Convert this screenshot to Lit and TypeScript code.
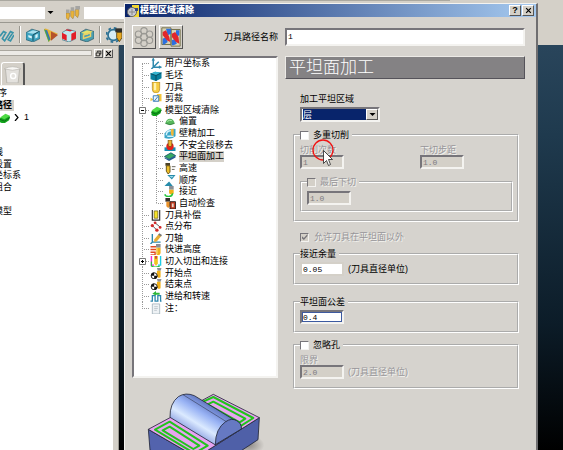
import { LitElement, html, css, svg } from "lit";
import { customElement, property } from "lit/decorators.js";
import { classMap } from "lit/directives/class-map.js";

const BLOCK_GREEN = svg`<path d="M1 7l6-4 5 2-1 4-6 4-4-2z" fill="#12a51c"/><path d="M1 6l6-4 5 2-6 4z" fill="#4fdb45"/><path d="M1 8l5 2 6-4" fill="none" stroke="#0b6b14"/>`;
const TOOL = svg`<path d="M6 0h5v4h-5z" fill="#8b8f94"/><path d="M6 4h5v6l-2 3-3-2z" fill="#f0b019"/><path d="M7 4v7" stroke="#fff0a0"/>`;
const START = svg`<path d="M7 0h5l-1 3H8z" fill="#8b8f94"/><path d="M7 3h4v7l-2 1-2-2z" fill="#f0b019"/><circle cx="4" cy="8.500" r="3.300" fill="#fff" stroke="#111"/><path d="M4 8.500V5A3.500 3.500 0 0 0 .5 8.500zM4 8.500V12a3.500 3.500 0 0 0 3.500-3.500z" fill="#111"/>`;

const ICONS: Record<string, unknown> = {
  axes: svg`<path d="M3 1v9h8M3 10l6-6M2 3l1-2 1 2M9 9l2 1-2 1M1 12l2-2" fill="none" stroke="#2d89ad" stroke-width="1.600"/>`,
  stock: svg`<path d="M0 4l5-2 7 1v6l-6 3-6-2z" fill="#087f9e"/><path d="M0 4l5-2 7 1-6 3z" fill="#35b4cf"/><path d="M0 4l6 2v6M6 6l6-3" fill="none" stroke="#07465c"/>`,
  tool: svg`<path d="M2 0h8v7q0 5-4 5t-4-5z" fill="#f6cb3f" stroke="#a77a17" stroke-width=".7"/><path d="M5 1v8" stroke="#fff3b0" stroke-width="2.500"/>`,
  clip: svg`<path d="M0 5l3 2-3 2zM7 1h5v8H7z" fill="#f4c53c"/><path d="M3 3h6v6H3z" fill="#e8f4fb" stroke="#2e75b5"/><path d="M4 9l4-5" stroke="#2e75b5"/>`,
  block: BLOCK_GREEN,
  offset: svg`<path d="M1 8q1-5 5-5t5 5q-5 3-10 0z" fill="#57b75c"/><path d="M3 6q2-2 5-1" stroke="#b9efb5" fill="none"/><path d="M1 8q5 3 10 0" stroke="#327f3c" fill="none"/>`,
  wall: svg`<path d="M0 6q4-6 12-5v8q-4 4-12 2z" fill="#3ba6c8"/><path d="M2 8q0-5 5-5M3 9h7" fill="none" stroke="#d4f1fa" stroke-width="1.500"/><path d="M7 1h3v6l-1 2-2-2z" fill="#f0b83b"/>`,
  unsafe: svg`<path d="M0 8h12v4H0z" fill="#188db3"/><circle cx="6" cy="7" r="4" fill="#e4231d"/><path d="M4 0h4v6q-2 3-4 0z" fill="#eeb231" stroke="#5d3b10" stroke-width=".7"/>`,
  flat: svg`<path d="M0 6l7-4 5 3-7 4z" fill="#36aa64" stroke="#225c6b"/><path d="M0 7v1l5 3 7-4V5L5 9z" fill="#255c91"/>`,
  speed: svg`<path d="M1 0h5v3H1z" fill="#4b4228"/><path d="M2 3h4v7l-2 2-2-3z" fill="#eebf29" stroke="#5e4b13"/><path d="M8 4h4M8 7h3" stroke="#5f5b50"/>`,
  order: svg`<path d="M3 0h9L8 5z" fill="#268baa"/><path d="M5 1h5L8 3z" fill="#a2dceb"/><path d="M0 12h9L5 7z" fill="#268baa"/>`,
  approach: svg`<path d="M5 0h5v4H5z" fill="#8b8f94"/><path d="M5 4h5v4q-2 3-5 0z" fill="#f0b019"/><path d="M9 8q-1 4-5 3.500T1 9" fill="none" stroke="#22c63c" stroke-width="1.700"/>`,
  verify: svg`<path d="M1 0h5v4H1z" fill="#35302b"/><path d="M2 4h4v5l-2 2-2-2z" fill="#e9922b"/><path d="M6 4h6v8H6z" fill="#c13b1f" stroke="#2b2422"/><path d="M8 6h2v4H8z" fill="#e8d6c8"/>`,
  comp: svg`<path d="M2 0v11h8V0" fill="none" stroke="#333" stroke-width="1.300"/><path d="M4 1h4v8H4z" fill="#f4e327" stroke="#5e4b13" stroke-width=".7"/>`,
  points: svg`<path d="M2 5l5 5M5 2l6 5" stroke="#4a4a4a" fill="none"/><g fill="#d22a2a"><circle cx="2" cy="5" r="1.800"/><circle cx="5" cy="2" r="1.500"/><circle cx="7" cy="10" r="1.800"/><circle cx="10.500" cy="7" r="1.500"/></g>`,
  axis: svg`<path d="M2 1v9h9M0 12l3-3" fill="none" stroke="#2d89ad" stroke-width="1.500"/><path d="M4 7l5-6 3 2-5 6-3 1z" fill="#e6ad35"/><path d="M9 1l3 2" stroke="#777" stroke-width="2"/>`,
  rapid: svg`<path d="M0 3h6M0 6h6M0 9h5v3H0" stroke="#e04a22" fill="none" stroke-width="1.500"/>${TOOL}`,
  leads: svg`<path d="M1 0v10h3" fill="none" stroke="#f02ad0" stroke-width="1.500"/><path d="M11 0v10H8" fill="none" stroke="#1ecde6" stroke-width="1.500"/><path d="M4 0h4v8l-2 3-2-3z" fill="#f0c522"/><path d="M1 6v5q4 2 9 0" fill="none" stroke="#28c03c" stroke-width="1.300"/><path d="M5 0h2v3H5z" fill="#c44"/>`,
  start: START,
  feed: svg`<path d="M0 11h2V5h3v6h3V5h3v6h1" fill="none" stroke="#2b86ad" stroke-width="1.400"/><path d="M2 3l4-3v2h4v2H6v1z" fill="#2fb83a"/>`,
  note: svg`<path d="M2 1h8v11H2z" fill="#eef2f5" stroke="#8fa0aa" stroke-width=".7"/><path d="M4 4h4M4 6h4M4 8h3" stroke="#aab4bc" stroke-width=".7"/>`,
  swirl: svg`<path d="M0 7l3-4 2 1-3 5 2 2 5-8 2 1-4 6 2 1 3-5" fill="none" stroke="#3993a8" stroke-width="1.400"/>`,
  cube: svg`<path d="M0 4l5-3 7 2v6l-6 3-6-2z" fill="#3fa3bf" stroke="#255d70" stroke-width=".6"/><path d="M1 4l5-2 5 1-5 2z" fill="#a8dfed"/><path d="M6 6v5M6 6l5-3" stroke="#16495a" stroke-width=".8"/><path d="M2 6l3 1v2L2 8zM8 6l2-1v3L8 9z" fill="#d8f4fa"/>`,
  cone: svg`<path d="M0 1q1-1 3 0l9 4-8 7z" fill="#e8b23a"/><path d="M0 1l2 1 3 8-1 2z" fill="#44a552"/><path d="M6 3l6 3-6 5z" fill="#b5522a"/><path d="M2 2l3 8" stroke="#3872b5" stroke-width="1.300"/>`,
  redcube: svg`<path d="M0 4l5-3 7 2v6l-6 3-6-2z" fill="#bfe7ee" stroke="#3b7485" stroke-width=".6"/><path d="M0 4l4 2v5l-4-2zM8 5l4-2v6l-4 2zM4 1l5 1-2 1-4-1z" fill="#e31d28"/>`,
  ringcube: svg`<path d="M0 4l5-3 7 2v6l-6 3-6-2z" fill="#4c9eb0" stroke="#2d5866" stroke-width=".6"/><path d="M1 4l5-2 5 1-5 3z" fill="#e5e36a"/><path d="M3 9V6l6-2v3z" fill="none" stroke="#ebd066" stroke-width="1.300"/>`,
  gear: svg`<circle cx="5.500" cy="6" r="4" fill="#d6ecf5" stroke="#2d7194" stroke-width="1.300"/><circle cx="5.500" cy="6" r="5.300" fill="none" stroke="#2d7194" stroke-width="1.400" stroke-dasharray="2 2.200"/><path d="M7 1h5v3H7z" fill="#30302c"/><path d="M8 4h4v4l-2 3-2-3z" fill="#e6a823" stroke="#4d3a10" stroke-width=".6"/>`,
  drills: svg`<g stroke="#8b7240" stroke-width=".4"><path d="M0 6h3v3l-1 3-2-2z" fill="#e9b33a"/><path d="M4 4h3v4l-1 3-2-2z" fill="#e9b33a"/><path d="M8 3h3v4l-1 3-2-2z" fill="#e9b33a"/></g><path d="M0 3h3v3H0zM4 1h3v3H4zM8 0h4v3H8z" fill="#a5a5a3"/>`,
  bin: svg`<path d="M1 2h10l-1 10H2z" fill="#e4e2de" stroke="#b5b2ab" stroke-width=".6"/><path d="M0 2q6-3 12 0-6 2-12 0z" fill="#f8f7f4" stroke="#bbb8b2" stroke-width=".5"/><circle cx="6.500" cy="7" r="1.800" fill="none" stroke="#fff"/>`,
  recycle: svg`<g fill="none" stroke="#9a9994" stroke-width=".7"><circle cx="6" cy="6" r="2.200"/><circle cx="6" cy="2.300" r="1.900"/><circle cx="2.700" cy="4.300" r="1.900"/><circle cx="9.300" cy="4.300" r="1.900"/><circle cx="2.700" cy="8" r="1.900"/><circle cx="9.300" cy="8" r="1.900"/><circle cx="6" cy="9.800" r="1.900"/></g>`,
  copy: svg`<path d="M.5.5h5.500v10H.5zM6 1.500h5.500v10H6z" fill="#d8d3b4" stroke="#77744f" stroke-width=".6"/><path d="M3 1h3v3L4 5zM1 7l2-1 1 3-2 1.500H1zM9 2h2v3L9 6zM6.500 8l2-1 1 3-2 1h-1z" fill="#2c6fe0"/><path d="M1 3l2-1 2 4 .5 3-2-1L1 5zM6.500 4l2-1 2 3 .5 4-2-1-2.500-3z" fill="#e2272b"/>`,
  app: svg`<path d="M5 0h7v12H5z" fill="#f3d732"/><circle cx="5" cy="7" r="4.500" fill="#c9ccd2" stroke="#666"/><path d="M2 7h6M5 4v6" stroke="#888"/><path d="M8 3h3v3H8z" fill="#3a4a80"/>`,
  restore: svg`<path d="M4 4V2h6v5H8M2 5h6v5H2z" fill="none" stroke="#000" stroke-width="1.300"/>`,
  close: svg`<path d="M2 2l8 8M10 2l-8 8" stroke="#000" stroke-width="2"/>`,
  down: svg`<path d="M2 4h8l-4 4z" fill="#000"/>`,
};

const icon = (name: string) =>
  html`<svg class="icon ${name}" viewBox="0 0 12 12" aria-hidden="true">${ICONS[name]}</svg>`;

interface TreeNode { text: string; icon: string; child?: boolean; box?: string; selected?: boolean; last?: boolean; first?: boolean; }

const NODES: TreeNode[] = [
  { text: "用户坐标系", icon: "axes", first: true },
  { text: "毛坯", icon: "stock" },
  { text: "刀具", icon: "tool" },
  { text: "剪裁", icon: "clip" },
  { text: "模型区域清除", icon: "block", box: "−" },
  { text: "偏置", icon: "offset", child: true },
  { text: "壁精加工", icon: "wall", child: true },
  { text: "不安全段移去", icon: "unsafe", child: true },
  { text: "平坦面加工", icon: "flat", child: true, selected: true },
  { text: "高速", icon: "speed", child: true },
  { text: "顺序", icon: "order", child: true },
  { text: "接近", icon: "approach", child: true },
  { text: "自动检查", icon: "verify", child: true, last: true },
  { text: "刀具补偿", icon: "comp" },
  { text: "点分布", icon: "points" },
  { text: "刀轴", icon: "axis" },
  { text: "快进高度", icon: "rapid" },
  { text: "切入切出和连接", icon: "leads", box: "+" },
  { text: "开始点", icon: "start" },
  { text: "结束点", icon: "start" },
  { text: "进给和转速", icon: "feed" },
  { text: "注：", icon: "note", last: true },
];

const shared = css`
  * { box-sizing: border-box; }
  .icon { display: block; width: 12px; height: 12px; flex: none; }
  ul { list-style: none; margin: 0; padding: 0; }
  button, input, select {
    font: inherit; color: inherit; margin: 0; padding: 0; border-radius: 0; outline: 0; min-width: 0;
  }
  .raised {
    display: grid; place-items: center; background: #d4d0c8;
    border: 1px solid; border-color: #fff #555 #555 #fff;
  }
`;

@customElement("strategy-tree")
class StrategyTree extends LitElement {
  static styles = [shared, css`
    :host {
      display: block; height: 322px; background: #fff;
      border: 2px solid; border-color: #77757a #f4f3f0 #f4f3f0 #77757a;
    }
    ul { display: grid; grid-auto-rows: minmax(0, 1fr); height: 256px; }
    li { display: flex; align-items: stretch; white-space: nowrap; line-height: 11px; min-height: 0; }
    .icon { align-self: center; margin-right: 3px; height: 11px; }
    .text { align-self: center; }
    .selected { background: #d4d0c8; }
    .guide {
      --v: repeating-linear-gradient(#999 0 1px, #fff 1px 2px);
      --h: repeating-linear-gradient(90deg, #999 0 1px, #fff 1px 2px);
      flex: none; width: 16px; position: relative;
      background: var(--v) 8px 0 / 1px 100% no-repeat;
    }
    .branch { background: var(--v) 8px 0 / 1px 100% no-repeat, var(--h) 8px 50% / 8px 1px no-repeat; }
    .inner { width: 14px; background: var(--v) 6px 0 / 1px 100% no-repeat, var(--h) 6px 50% / 8px 1px no-repeat; }
    .first { background: var(--v) 8px 100% / 1px 50% no-repeat, var(--h) 8px 50% / 8px 1px no-repeat; }
    .last { background: var(--v) 8px 0 / 1px 50% no-repeat, var(--h) 8px 50% / 8px 1px no-repeat; }
    .inner.last { background: var(--v) 6px 0 / 1px 50% no-repeat, var(--h) 6px 50% / 8px 1px no-repeat; }
    .box { position: absolute; left: 5px; top: 2px; width: 7px; height: 7px; background: #fff; }
  `];
  render() {
    return html`<ul role="tree" aria-label="策略">${NODES.map((n) => html`
      <li role="treeitem" aria-selected=${n.selected ? "true" : "false"}>
        <span class=${classMap({ guide: true, branch: !n.child, first: !!n.first, last: !!n.last && !n.child })}>
          ${n.box ? html`<svg class="box" viewBox="0 0 7 7"><path d=${n.box === "+" ? "M2 3.5h3M3.5 2v3" : "M2 3.5h3"} stroke="#000"/><path d="M.5.5h6v6h-6z" fill="none" stroke="#777"/></svg>` : ""}
        </span>
        ${n.child ? html`<span class=${classMap({ guide: true, inner: true, last: !!n.last })}></span>` : ""}
        ${icon(n.icon)}
        <span class=${classMap({ text: true, selected: !!n.selected })}>${n.text}</span>
      </li>`)}</ul>`;
  }
}

@customElement("explorer-pane")
class ExplorerPane extends LitElement {
  static styles = [shared, css`
    :host { display: flex; flex-direction: column; background: #d4d0c8; border-right: 1px solid #9a9890; padding-right: 5px; min-height: 0; }
    .caption { display: flex; align-items: center; gap: 1px; height: 12px; margin-top: 1px; }
    .grip { flex: 1; height: 6px; margin-right: 1px; border: 1px solid #aaa79f; border-left: 0; background: #eceae6; }
    .raised { width: 9px; height: 9px; }
    .raised .icon { width: 7px; height: 7px; }
    .tabs { height: 27px; display: flex; align-items: flex-end; border-bottom: 1px solid #f4f3f0; padding-left: 1px; }
    .tab { width: 24px; height: 23px; border-width: 1px 2px 0 1px; border-top-left-radius: 3px; border-top-right-radius: 3px; }
    .tab .icon { width: 17px; height: 17px; }
    .list { flex: 1; background: #fff; overflow: hidden; }
    ul { display: grid; grid-auto-rows: minmax(0, 1fr); height: 129px; margin: 2px 0 0 -24px; }
    li { display: flex; align-items: center; white-space: nowrap; line-height: 11px; min-height: 0; }
    .current span { background: #d4d0c8; font-weight: bold; padding-right: 2px; }
    .entry { padding-left: 23px; gap: 4px; }
    .entry .icon { width: 11px; height: 11px; }
    .entry span { padding-left: 1px; }
    .chevron { width: 5px; height: 7px; }
  `];
  render() {
    return html`
      <div class="caption"><span class="grip"></span>
        <button class="raised" aria-label="还原">${icon("restore")}</button>
        <button class="raised" aria-label="关闭">${icon("close")}</button></div>
      <div class="tabs"><button class="raised tab" aria-label="回收站">${icon("bin")}</button></div>
      <div class="list"><ul>
        <li>NC程序</li>
        <li class="current"><span>刀具路径</span></li>
        <li class="entry">${icon("block")}<svg class="chevron" viewBox="0 0 5 7"><path d="M1 0l3 3.500L1 7" fill="none" stroke="#000" stroke-width="1.200"/></svg><span>1</span></li>
        <li></li><li></li>
        <li>参考线</li><li>特征设置</li><li>用户坐标系</li><li>层和组合</li><li></li><li>残留模型</li>
      </ul></div>`;
  }
}

@customElement("strategy-form")
class StrategyForm extends LitElement {
  static styles = [shared, css`
    :host { display: block; line-height: 10px; }
    h1 {
      margin: 0; height: 23px; padding-left: 3px; font-size: 17px; line-height: 21px; font-weight: 300;
      color: #fff; background: #848284; border: 1px solid; border-color: #eceae6 #55535a #55535a #eceae6;
    }
    form { padding: 15px 6px 0 8px; display: flex; flex-direction: column; }
    .area { display: flex; flex-direction: column; gap: 3px; align-items: flex-start; padding-left: 7px; margin-bottom: 8px; }
    .combo {
      display: grid; grid-template-columns: 1fr 12px; width: 80px; height: 15px; background: #fff;
      border: 2px solid; border-color: #77757a #f4f3f0 #f4f3f0 #77757a;
    }
    .combo select {
      appearance: none; grid-area: 1 / 1 / 2 / 3; width: 100%; height: 11px; padding-left: 1px; line-height: 10px;
      border: 0; background: linear-gradient(#08246b, #08246b) 1px 0 / 64px 11px no-repeat; color: #fff;
    }
    .combo .raised { grid-area: 1 / 2; pointer-events: none; }
    .combo .icon { width: 9px; height: 9px; }
    fieldset { margin: 0; padding: 0 5px 8px; min-width: 0; border: 2px groove #fff; }
    legend { display: flex; align-items: center; height: 10px; padding: 0 3px 0 0; margin: 0; }
    .check { display: flex; align-items: center; gap: 4px; height: 10px; white-space: nowrap; }
    .check input {
      appearance: none; width: 9px; height: 9px; background: #fff; display: grid; place-items: center;
      border: 1px solid; border-color: #77757a #f4f3f0 #f4f3f0 #77757a;
    }
    .check input:disabled { background: #d4d0c8; }
    .check input:checked::before { content: ""; width: 6px; height: 6px; background: #77757a; clip-path: polygon(0 30%, 40% 65%, 100% 0, 100% 35%, 40% 100%, 0 65%); }
    .dim { color: #98969a; text-shadow: 1px 1px #f4f3f0; }
    .num {
      display: block; width: 44px; height: 14px; padding-left: 1px; background: #fff;
      font: 8px/10px "Liberation Mono", monospace;
      border: 2px solid; border-color: #77757a #f4f3f0 #f4f3f0 #77757a;
    }
    .num:disabled { background: #d4d0c8; color: #7d7b7f; }
    .pair { display: grid; grid-template-columns: 120px 1fr; padding-top: 5px; margin-bottom: 8px; }
    .sub { padding: 0 5px 5px; margin-right: -1px; }
    .sub .num { margin-top: 4px; }
    .outside { margin: 10px 0 7px 7px; gap: 5px; }
    .line { display: flex; align-items: center; gap: 4px; white-space: nowrap; }
    .tight { padding-bottom: 7px; margin-bottom: 12px; }
    .tight .line { padding-top: 3px; }
    .flat { border-color: #d4d0c8; background-clip: padding-box; }
    .tolerance { margin-bottom: 7px; }
    .focused { box-shadow: inset 0 0 0 1px #3d5aa0; }
    .limit { padding-top: 5px; }
  `];
  render() {
    return html`
      <h1>平坦面加工</h1>
      <form>
        <div class="area">
          <label for="area">加工平坦区域</label>
          <div class="combo"><select id="area"><option>层</option></select><span class="raised">${icon("down")}</span></div>
        </div>
        <fieldset>
          <legend><label class="check"><input type="checkbox" />多重切削</label></legend>
          <div class="pair">
            <div><label class="dim" for="cuts">切削次数</label><input class="num" id="cuts" value="1" disabled /></div>
            <div><label class="dim" for="step">下切步距</label><input class="num" id="step" value="1.0" disabled /></div>
          </div>
          <fieldset class="sub">
            <legend><label class="check dim"><input type="checkbox" disabled />最后下切</label></legend>
            <input class="num" aria-label="最后下切" value="1.0" disabled />
          </fieldset>
        </fieldset>
        <label class="check dim outside"><input type="checkbox" checked disabled />允许刀具在平坦面以外</label>
        <fieldset class="tight">
          <legend>接近余量</legend>
          <div class="line"><input class="num flat" id="allow" value="0.05" /><label for="allow">(刀具直径单位)</label></div>
        </fieldset>
        <fieldset class="tight tolerance">
          <legend><label for="tol">平坦面公差</label></legend>
          <div class="line"><input class="num focused" id="tol" value="0.4" /></div>
        </fieldset>
        <fieldset>
          <legend><label class="check"><input type="checkbox" />忽略孔</label></legend>
          <div class="limit"><label class="dim" for="limit">限界</label>
            <div class="line dim"><input class="num" id="limit" value="2.0" disabled /><span>(刀具直径单位)</span></div></div>
        </fieldset>
      </form>`;
  }
}

@customElement("part-preview")
class PartPreview extends LitElement {
  static styles = css`
    :host { display: block; }
    svg { display: block; width: 120px; height: 70px; }
  `;
  render() {
    return html`<svg viewBox="90 60 360 210" role="img" aria-label="平坦面加工">
      <defs>
        <linearGradient id="dome" x1="200" y1="180" x2="262" y2="80" gradientUnits="userSpaceOnUse">
          <stop offset="0" stop-color="#7d92dc"/><stop offset=".35" stop-color="#dbeaff"/><stop offset=".65" stop-color="#98b2f4"/><stop offset="1" stop-color="#5368b4"/>
        </linearGradient>
        <radialGradient id="shade"><stop offset="0" stop-color="#8c8884"/><stop offset="1" stop-color="#d6d3ce"/></radialGradient>
      </defs>
      <ellipse cx="400" cy="225" rx="48" ry="30" fill="url(#shade)"/>
      <g stroke="#222638" stroke-width="2.500" stroke-linejoin="round">
        <path d="M100 178l5 62 140 90v-68z" fill="#5363ad"/>
        <path d="M433 143l-4 66-184 121v-68z" fill="#4f60a8"/>
        <path d="M100 178l195-105 138 70-188 119z" fill="#e7a4f0"/>
      </g>
      <g fill="none" stroke="#22c41c" stroke-width="6" stroke-linejoin="round">
        <path d="M120 179l44-24 114 72-40 23z"/><path d="M143 181l21-11 89 57-18 10z"/>
        <path d="M258 98l37-17 120 63-36 23z"/><path d="M278 103l17-8 96 51-17 11z"/>
      </g>
      <g stroke="#222638" stroke-width="2.500" stroke-linejoin="round">
        <path d="M165 142q-1-42 25-62 22-14 48-3l115 70q23 8 26 29l-79 48z" fill="url(#dome)"/>
        <path d="M301 224q0-48 31-69 18-12 33-3 15 7 14 25z" fill="#6679c2"/>
        <path d="M204 74l130 81" fill="none" stroke-width="1.500"/>
      </g>
    </svg>`;
  }
}

@customElement("tool-strip")
class ToolStrip extends LitElement {
  @property({ type: Array }) icons: string[] = [];
  static styles = [shared, css`
    :host { display: block; background: #d4d0c8; height: 45px; }
    .row { display: flex; align-items: center; height: 23px; }
    .top { width: 80%; border-top: 1px solid #aaa8a0; padding-top: 2px; border-bottom: 1px solid #9a9890; }
    .value { width: 45px; height: 12px; border: 0; background: #fff; }
    .drop { width: 11px; height: 12px; border: 0; background: #d4d0c8; display: grid; place-items: center; }
    .drop .icon { width: 9px; height: 9px; }
    .drills { width: 14px; height: 14px; margin: 0 4px 0 10px; }
    .wide { width: 60px; }
    .second { gap: 4px; }
    .second .icon { width: 14px; height: 14px; }
    .second .gear { width: 16px; height: 16px; }
    .rule { width: 1px; height: 17px; background: #9a9890; box-shadow: 1px 0 #fff; margin: 0 2px 0 1px; }
  `];
  render() {
    return html`
      <div class="row top"><input class="value" aria-label="刀具" /><button class="drop" aria-label="选择">${icon("down")}</button>
        ${icon("drills")}<input class="value wide" aria-label="刀具名称" /></div>
      <div class="row second">${this.icons.map((n) => n === "|" ? html`<span class="rule"></span>` : icon(n))}</div>`;
  }
}

@customElement("app-root")
class AppRoot extends LitElement {
  static styles = [shared, css`
    :host {
      display: block; position: relative; height: 100vh; overflow: hidden;
      font: 9px/11px "Liberation Sans", "Noto Sans CJK SC", sans-serif; color: #000;
      background: linear-gradient(#29455b 46px, #1f3a4e 30%, #0c1c28 72%, #000 100%);
    }
    .desk { display: flex; flex-direction: column; height: 100%; }
    .explorer { flex: 1; width: 119px; border-top: 1px solid #8c8a84; }
    .dialog {
      position: absolute; top: 3px; bottom: 0; left: 124px; right: 25px; overflow: hidden;
      background: #d6d3ce; border: solid; border-width: 1px 2px 0 1px; border-color: #f4f3f0 #6f6e70 #000 #f4f3f0;
    }
    .title {
      display: flex; align-items: center; gap: 1px; height: 13px; padding: 0 2px; color: #fff; font-weight: bold;
      background: linear-gradient(90deg, #0a246a, #a6caf0);
    }
    .title b { flex: 1; }
    .title .raised { width: 12px; height: 11px; color: #000; font: bold 9px/9px "Liberation Sans", sans-serif; }
    .title .close { width: 7px; height: 7px; }
    .body { display: grid; grid-template-columns: 146px 1fr; gap: 7px; padding: 8px 11px 0 7px; }
    .head { display: flex; align-items: center; gap: 3px; height: 24px; }
    .head .raised { width: 24px; height: 24px; }
    .head .icon { width: 20px; height: 20px; }
    .head label { margin-left: auto; }
    .name {
      width: 100%; height: 18px; align-self: center; padding: 0 0 2px 1px; background: #fff;
      font: 8px/10px "Liberation Mono", monospace;
      border: 2px solid; border-color: #77757a #f4f3f0 #f4f3f0 #77757a;
    }
    .preview { margin: 12px 0 0 13px; }
    .pointer { position: absolute; left: 187px; top: 135px; width: 24px; height: 28px; pointer-events: none; }
  `];
  render() {
    return html`
      <div class="desk">
        <tool-strip .icons=${["swirl", "|", "cube", "cone", "redcube", "ringcube", "|", "gear"]}></tool-strip>
        <explorer-pane class="explorer"></explorer-pane>
      </div>
      <section class="dialog" role="dialog" aria-label="模型区域清除">
        <header class="title">${icon("app")}<b>模型区域清除</b>
          <button class="raised" aria-label="帮助">?</button><button class="raised" aria-label="关闭">${icon("close")}</button></header>
        <div class="body">
          <div class="head">
            <button class="raised" aria-label="重新计算">${icon("recycle")}</button>
            <button class="raised" aria-label="复制">${icon("copy")}</button>
            <label for="name">刀具路径名称</label>
          </div>
          <input class="name" id="name" value="1" />
          <div><strategy-tree></strategy-tree><part-preview class="preview"></part-preview></div>
          <strategy-form></strategy-form>
        </div>
        <svg class="pointer" viewBox="0 0 24 28" aria-hidden="true">
          <circle cx="11" cy="11" r="10" fill="none" stroke="#f01414" stroke-width="1.300"/>
          <path d="M11.500 11.500v13l3-3 2 5 2-1-2-5h4z" fill="#fff" stroke="#222" stroke-width=".8"/>
        </svg>
      </section>`;
  }
}
